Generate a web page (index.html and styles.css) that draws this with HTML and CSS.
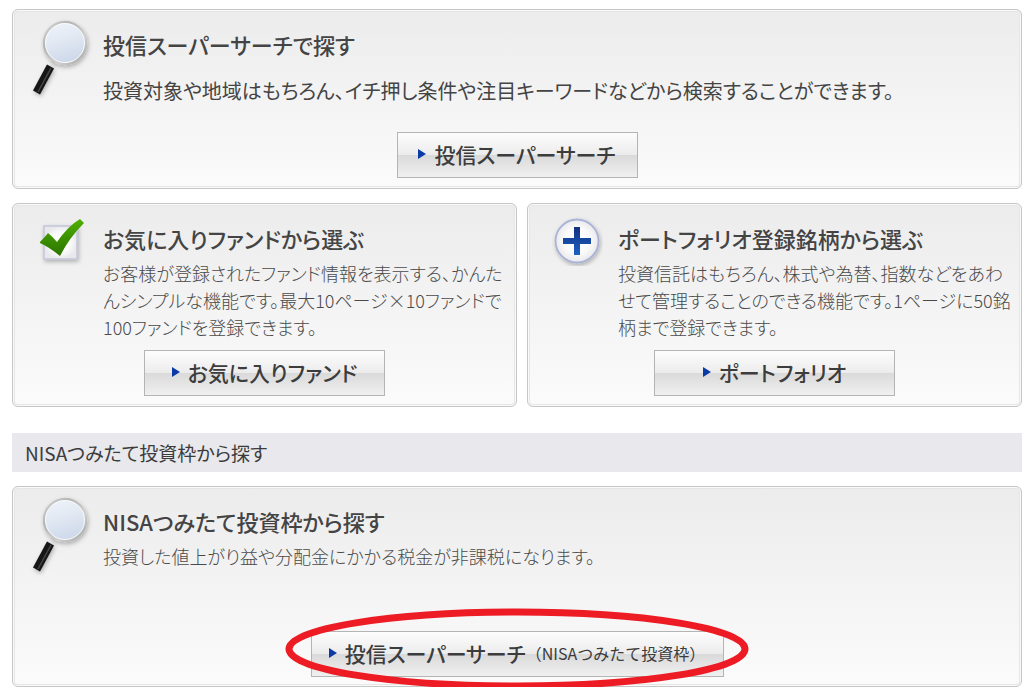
FILE: index.html
```html
<!DOCTYPE html>
<html lang="ja">
<head>
<meta charset="utf-8">
<title>ファンドを探す</title>
<meta name="viewport" content="width=device-width, initial-scale=1">
<link rel="stylesheet" href="styles.css">
</head>
<body>
<svg class="defs" width="0" height="0" aria-hidden="true">
  <defs>
    <linearGradient id="lens" x1="0" y1="0" x2="0.3" y2="1">
      <stop offset="0" stop-color="#f1f5fb"/><stop offset="0.5" stop-color="#e2e9f3"/><stop offset="1" stop-color="#ced9ea"/>
    </linearGradient>
    <linearGradient id="rim" x1="0" y1="0" x2="1" y2="1">
      <stop offset="0" stop-color="#d8d8d8"/><stop offset="0.3" stop-color="#b4b6b4"/><stop offset="0.65" stop-color="#d0d0ce"/><stop offset="1" stop-color="#a2a4a2"/>
    </linearGradient>
    <linearGradient id="check" x1="0" y1="0" x2="0" y2="1">
      <stop offset="0" stop-color="#4fb000"/><stop offset="1" stop-color="#2b7300"/>
    </linearGradient>
    <linearGradient id="plus" x1="0" y1="0" x2="0" y2="1">
      <stop offset="0" stop-color="#123080"/><stop offset="1" stop-color="#1c63c4"/>
    </linearGradient>
    <radialGradient id="paper">
      <stop offset="0" stop-color="#ffffff"/><stop offset="0.6" stop-color="#fbfbfb"/><stop offset="1" stop-color="#e9e9ed"/>
    </radialGradient>
    <filter id="shade" x="-30%" y="-30%" width="160%" height="160%">
      <feDropShadow dx="1" dy="2" stdDeviation="2" flood-color="#000" flood-opacity="0.28"/>
    </filter>
    <symbol id="magnifier" viewBox="0 0 72 84">
      <g filter="url(#shade)">
        <path d="M29 45l3-6" stroke="#bbb" stroke-width="4"/>
        <path d="M26.500 48.500L12.500 74.500" stroke="#171717" stroke-width="8"/>
        <path d="M27 50L14 74" stroke="#4a4546" stroke-width="1.500"/>
        <circle cx="41" cy="25" r="21" fill="url(#lens)" stroke="url(#rim)" stroke-width="2.500"/>
        <circle cx="41" cy="25" r="19.500" fill="none" stroke="#f8fafc" stroke-width="1"/>
      </g>
    </symbol>
  </defs>
</svg>
<main class="page">
  <section class="card card-search">
    <svg class="icon icon-lens" aria-hidden="true"><use href="#magnifier"/></svg>
    <div class="copy">
      <h2 class="title">投信スーパーサーチで探す</h2>
      <p class="lead">投資対象や地域はもちろん、イチ押し条件や注目キーワードなどから検索することができます。</p>
    </div>
    <div class="action"><button type="button" class="btn"><span class="arrow"></span>投信スーパーサーチ</button></div>
  </section>

  <div class="pair">
    <section class="card card-half">
      <svg class="icon icon-small" viewBox="0 0 52 52" aria-hidden="true">
        <rect x="8" y="12" width="33" height="33" fill="url(#paper)" stroke="#c3c6dc" stroke-width="1.500" filter="url(#shade)"/>
        <path d="M4 28Q9 23 12 19Q17 23 21 28Q32 12 44 5L48 9Q33 24 24 42Q13 33 4 29Z" fill="url(#check)"/>
      </svg>
      <div class="copy">
        <h2 class="title">お気に入りファンドから選ぶ</h2>
        <p class="text">お客様が登録されたファンド情報を表示する、かんた<br>んシンプルな機能です。最大10ページ×10ファンドで<br>100ファンドを登録できます。</p>
      </div>
      <div class="action"><button type="button" class="btn"><span class="arrow"></span>お気に入りファンド</button></div>
    </section>
    <section class="card card-half">
      <svg class="icon icon-small" viewBox="0 0 52 52" aria-hidden="true">
        <circle cx="26" cy="27" r="21.500" fill="url(#paper)" stroke="#a9b3d6" stroke-width="1.800" filter="url(#shade)"/>
        <path d="M23 13h6v11h11v6H29v11h-6V30H12v-6h11z" fill="url(#plus)"/>
      </svg>
      <div class="copy">
        <h2 class="title">ポートフォリオ登録銘柄から選ぶ</h2>
        <p class="text">投資信託はもちろん、株式や為替、指数などをあわ<br>せて管理することのできる機能です。1ページに50銘<br>柄まで登録できます。</p>
      </div>
      <div class="action"><button type="button" class="btn"><span class="arrow"></span>ポートフォリオ</button></div>
    </section>
  </div>

  <h1 class="bar">NISAつみたて投資枠から探す</h1>

  <section class="card card-nisa">
    <svg class="icon icon-lens" aria-hidden="true"><use href="#magnifier"/></svg>
    <div class="copy">
      <h2 class="title">NISAつみたて投資枠から探す</h2>
      <p class="text">投資した値上がり益や分配金にかかる税金が非課税になります。</p>
    </div>
    <div class="action">
      <div class="marked">
        <button type="button" class="btn btn-wide"><span class="arrow"></span>投信スーパーサーチ<small class="note">（NISAつみたて投資枠）</small></button>
        <svg class="ring" viewBox="0 0 464 84" aria-hidden="true"><ellipse cx="232" cy="42" rx="228" ry="37" fill="none" stroke="#ed1c24" stroke-width="7"/></svg>
      </div>
    </div>
  </section>
</main>
</body>
</html>
```
FILE: styles.css
```css
* { box-sizing: border-box; }

body {
  margin: 0;
  background: #fff;
  color: #444;
  font-family: "Noto Sans CJK JP", sans-serif;
  font-feature-settings: "palt";
}

.defs { position: absolute; }

.page {
  padding: 9px 2px 0 12px;
  overflow: hidden;
}

.card {
  display: grid;
  grid-template-columns: 90px 1fr;
  grid-template-rows: auto 1fr;
  border: 1px solid #c6c6c6;
  border-radius: 6px;
  background: linear-gradient(#ececec, #fbfbfb);
  box-shadow: inset 0 0 0 1px #fafafa, inset 0 0 0 2px #e6e6e6;
}

.card-search { min-height: 180px; padding-bottom: 10px; }
.card-half { min-height: 204px; padding-bottom: 10px; }
.card-nisa { min-height: 201px; padding-bottom: 9px; }

.pair {
  display: grid;
  grid-template-columns: 101fr 99fr;
  gap: 10px;
  margin-top: 14px;
}

.icon { display: block; }
.icon-lens { width: 72px; height: 84px; margin: 8px 0 0 11px; }
.icon-small { width: 52px; height: 52px; margin: 10px 0 0 23px; }

.copy { white-space: nowrap; }

.title {
  margin: 18px 0 0;
  font-size: 22px;
  line-height: 32px;
  font-weight: 500;
}

.lead {
  margin: 16px 0 0;
  font-size: 20px;
  line-height: 30px;
}

.text {
  margin: 6px 0 0;
  color: #4a4a4a;
  font-size: 18px;
  line-height: 27px;
  font-weight: 300;
}

.action {
  grid-column: 1 / -1;
  align-self: end;
  display: flex;
  justify-content: center;
}

.btn {
  display: flex;
  align-items: center;
  justify-content: center;
  width: 241px;
  height: 46px;
  padding: 0 0 2px;
  border: 1px solid #b4b4b4;
  border-radius: 0;
  background: linear-gradient(#fdfdfd, #ececec 49%, #dadada 51%, #f0f0f0);
  color: #3c3c3c;
  font-family: inherit;
  font-feature-settings: inherit;
  font-size: 21px;
  line-height: 30px;
  font-weight: 500;
  white-space: nowrap;
}

.btn-wide { width: 413px; }

.arrow {
  margin-right: 8px;
  border: 5px solid transparent;
  border-left: 8px solid #0a3aa5;
  border-right: 0;
}

.note {
  font-size: 16px;
  font-weight: 400;
  font-feature-settings: normal;
}

.marked { position: relative; }

.ring {
  position: absolute;
  left: 50%;
  top: 50%;
  width: 464px;
  height: 84px;
  margin: -47px 0 0 -232px;
  pointer-events: none;
}

.bar {
  margin: 26px 0 14px;
  padding: 4px 13px;
  background: #e8e8ed;
  color: #3c3c3c;
  font-size: 19px;
  line-height: 31px;
  font-weight: 400;
}
```
